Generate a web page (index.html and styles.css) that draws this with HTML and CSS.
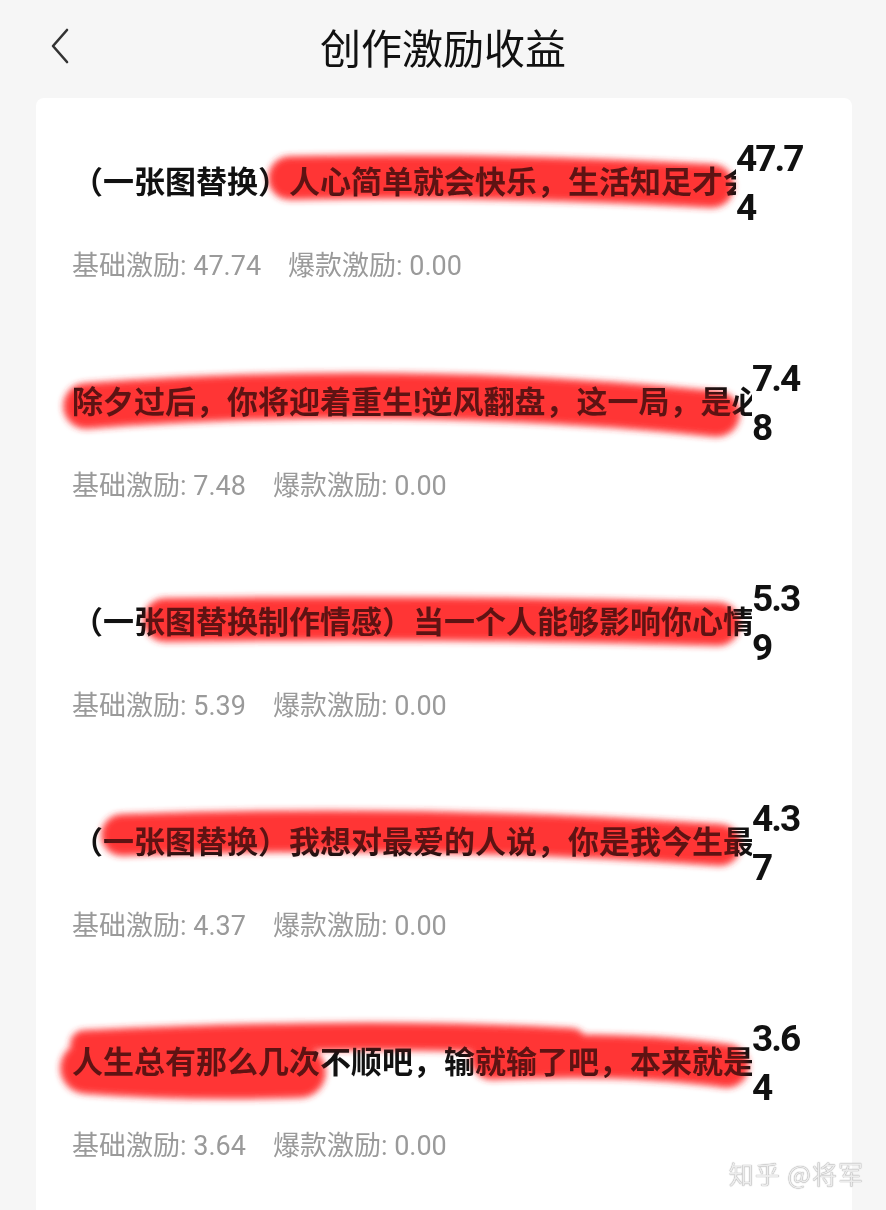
FILE: index.html
```html
<!DOCTYPE html>
<html lang="zh-CN">
<head>
<meta charset="utf-8">
<title>创作激励收益</title>
<link rel="stylesheet" href="styles.css">
</head>
<body>
<div class="page">
  <header class="header">
    <div class="back">
      <svg class="back-icon" width="20" height="36" viewBox="0 0 20 36">
        <path d="M17 2 L3 18 L17 34" fill="none" stroke="#333" stroke-width="2.6" stroke-linecap="round" stroke-linejoin="round"/>
      </svg>
    </div>
    <h1 class="title-main">创作激励收益</h1>
    <div class="header-spacer"></div>
  </header>

  <main class="card">
    <section class="item">
      <div class="item-row">
        <div class="item-title">（一张图替换）人心简单就会快乐，生活知足才会幸福</div>
        <div class="amount amount--wide">47.74</div>
      </div>
      <div class="item-sub"><span>基础激励: 47.74</span><span class="sub-gap">爆款激励: 0.00</span></div>
      <svg class="scribble" viewBox="0 0 730 220" width="730" height="220">
        <defs><filter id="b1" filterUnits="userSpaceOnUse" x="-120" y="-60" width="980" height="340"><feGaussianBlur stdDeviation="3.5"/></filter></defs>
        <g id="s1" filter="url(#b1)"><path d="M218 80 Q430 76 640 88" stroke-width="42"/></g>
      </svg>
      <svg class="scribble-tint" viewBox="0 0 730 220" width="730" height="220"><use href="#s1"/></svg>
    </section>

    <section class="item">
      <div class="item-row">
        <div class="item-title">除夕过后，你将迎着重生!逆风翻盘，这一局，是必胜局</div>
        <div class="amount">7.48</div>
      </div>
      <div class="item-sub"><span>基础激励: 7.48</span><span class="sub-gap">爆款激励: 0.00</span></div>
      <svg class="scribble" viewBox="0 0 730 220" width="730" height="220">
        <defs><filter id="b2" filterUnits="userSpaceOnUse" x="-120" y="-60" width="980" height="340"><feGaussianBlur stdDeviation="3.5"/></filter></defs>
        <g id="s2" filter="url(#b2)"><path d="M14 88 Q330 64 645 96" stroke-width="44"/></g>
      </svg>
      <svg class="scribble-tint" viewBox="0 0 730 220" width="730" height="220"><use href="#s2"/></svg>
    </section>

    <section class="item">
      <div class="item-row">
        <div class="item-title">（一张图替换制作情感）当一个人能够影响你心情的时候</div>
        <div class="amount">5.39</div>
      </div>
      <div class="item-sub"><span>基础激励: 5.39</span><span class="sub-gap">爆款激励: 0.00</span></div>
      <svg class="scribble" viewBox="0 0 730 220" width="730" height="220">
        <defs><filter id="b3" filterUnits="userSpaceOnUse" x="-120" y="-60" width="980" height="340"><feGaussianBlur stdDeviation="3.5"/></filter></defs>
        <g id="s3" filter="url(#b3)"><path d="M93 82 Q370 78 646 86" stroke-width="42"/></g>
      </svg>
      <svg class="scribble-tint" viewBox="0 0 730 220" width="730" height="220"><use href="#s3"/></svg>
    </section>

    <section class="item">
      <div class="item-row">
        <div class="item-title">（一张图替换）我想对最爱的人说，你是我今生最爱的人</div>
        <div class="amount">4.37</div>
      </div>
      <div class="item-sub"><span>基础激励: 4.37</span><span class="sub-gap">爆款激励: 0.00</span></div>
      <svg class="scribble" viewBox="0 0 730 220" width="730" height="220">
        <defs><filter id="b4" filterUnits="userSpaceOnUse" x="-120" y="-60" width="980" height="340"><feGaussianBlur stdDeviation="3.5"/></filter></defs>
        <g id="s4" filter="url(#b4)"><path d="M50 77 Q350 66 648 87" stroke-width="40"/></g>
      </svg>
      <svg class="scribble-tint" viewBox="0 0 730 220" width="730" height="220"><use href="#s4"/></svg>
    </section>

    <section class="item">
      <div class="item-row">
        <div class="item-title">人生总有那么几次不顺吧，输就输了吧，本来就是一场游戏</div>
        <div class="amount">3.64</div>
      </div>
      <div class="item-sub"><span>基础激励: 3.64</span><span class="sub-gap">爆款激励: 0.00</span></div>
      <svg class="scribble" viewBox="0 0 730 220" width="730" height="220">
        <defs><filter id="b5" filterUnits="userSpaceOnUse" x="-120" y="-60" width="980" height="340"><feGaussianBlur stdDeviation="3.5"/></filter></defs>
        <g id="s5" filter="url(#b5)">
          <path d="M12 66 Q300 52 500 64" stroke-width="26"/>
          <path d="M420 80 Q560 74 655 88" stroke-width="42"/>
          <path d="M14 90 Q120 98 228 94" stroke-width="50"/>
        </g>
      </svg>
      <svg class="scribble-tint" viewBox="0 0 730 220" width="730" height="220"><use href="#s5"/></svg>
    </section>
  </main>

  <div class="watermark">知乎 @将军</div>
</div>
</body>
</html>
```

FILE: styles.css
```css
* { box-sizing: border-box; }

html, body {
  margin: 0;
  padding: 0;
}

body {
  background: #f6f6f6;
  font-family: Roboto, "Noto Sans CJK SC", sans-serif;
  color: #111;
}

.page {
  position: relative;
  min-height: 1210px;
  display: flex;
  flex-direction: column;
  overflow: hidden;
}

.header {
  height: 98px;
  display: grid;
  grid-template-columns: 1fr auto 1fr;
  align-items: center;
  padding-bottom: 6px;
}

.back {
  padding-left: 50px;
  display: flex;
  align-items: center;
}

.back-icon {
  display: block;
}

.title-main {
  margin: 0;
  font-family: "Noto Sans CJK SC", sans-serif;
  font-size: 41px;
  font-weight: 400;
  line-height: 50px;
  color: #111;
}

.card {
  flex: 1;
  margin: 0 34px 0 36px;
  background: #fff;
  border-radius: 8px 8px 0 0;
  padding: 0 50px 0 36px;
}

.item {
  position: relative;
  padding: 36px 0 34px;
}

.item-row {
  display: flex;
  align-items: center;
  height: 98px;
}

.item-title {
  flex: 1;
  min-width: 0;
  overflow: hidden;
  white-space: nowrap;
  font-family: Roboto, "Noto Sans CJK SC", sans-serif;
  font-size: 31px;
  font-weight: 700;
  line-height: 40px;
  color: #111;
}

.amount {
  flex: none;
  width: 50px;
  font-family: Roboto, sans-serif;
  font-size: 37px;
  font-weight: 700;
  line-height: 49px;
  letter-spacing: -2px;
  word-break: break-all;
  color: #111;
}

.amount--wide {
  width: 68px;
  margin-right: -2px;
}

.item-sub {
  margin-top: 16px;
  font-size: 27px;
  line-height: 36px;
  color: #9a9a9a;
  white-space: nowrap;
}

.sub-gap {
  margin-left: 27px;
}

.scribble,
.scribble-tint {
  position: absolute;
  left: 0;
  top: 0;
  overflow: visible;
  pointer-events: none;
  fill: none;
  stroke: #ff3434;
  stroke-linecap: round;
}

.scribble {
  mix-blend-mode: multiply;
}

.scribble-tint {
  opacity: 0.32;
}

.watermark {
  position: absolute;
  right: 22px;
  bottom: 22px;
  font-family: "Noto Sans CJK SC", sans-serif;
  font-size: 25px;
  line-height: 30px;
  color: #ececec;
  text-shadow: 0 0 1px rgba(0, 0, 0, 0.6);
  letter-spacing: 1px;
}
```
